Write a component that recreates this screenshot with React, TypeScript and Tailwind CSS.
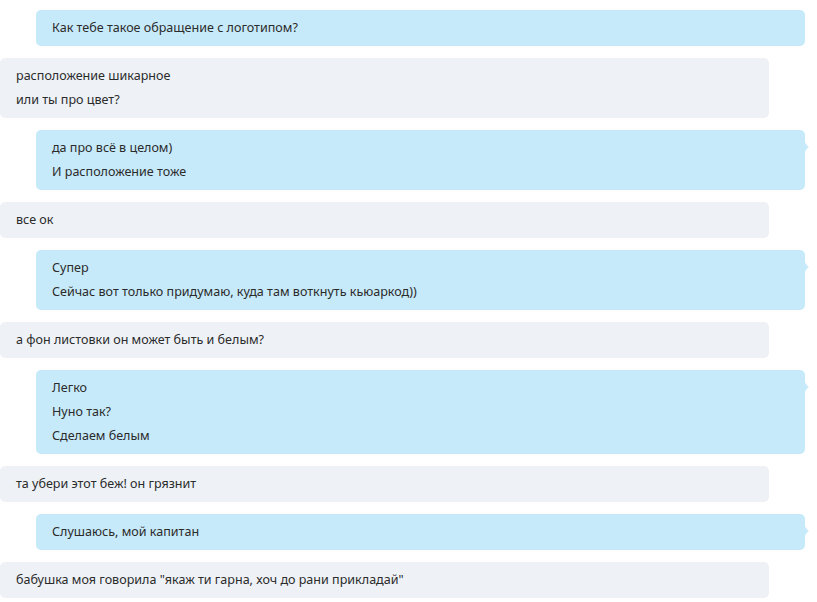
import React from "react";

type Msg = { out: boolean; lines: string[]; tail?: boolean };

const msgs: Msg[] = [
  { out: true, lines: ["Как тебе такое обращение с логотипом?"], tail: false },
  { out: false, lines: ["расположение шикарное", "или ты про цвет?"] },
  { out: true, lines: ["да про всё в целом)", "И расположение тоже"], tail: true },
  { out: false, lines: ["все ок"] },
  { out: true, lines: ["Супер", "Сейчас вот только придумаю, куда там воткнуть кьюаркод))"], tail: true },
  { out: false, lines: ["а фон листовки он может быть и белым?"] },
  { out: true, lines: ["Легко", "Нуно так?", "Сделаем белым"], tail: true },
  { out: false, lines: ["та убери этот беж! он грязнит"] },
  { out: true, lines: ["Слушаюсь, мой капитан"], tail: true },
  { out: false, lines: ["бабушка моя говорила \"якаж ти гарна, хоч до рани прикладай\""] },
];

function Tail() {
  return (
    <svg
      className="absolute -right-[5px] top-[9px]"
      width="6"
      height="16"
      viewBox="0 0 6 16"
    >
      <path d="M0 0 Q1.5 6 5 8 Q1.5 10 0 16 Z" fill="#c7eafa" />
    </svg>
  );
}

export default function App() {
  return (
    <div
      className="w-[817px] h-[602px] bg-white flex flex-col gap-[12px] pt-[10px] overflow-hidden text-[12.55px] text-[#2b2b2b]"
      style={{ fontFamily: '"Noto Sans", "Open Sans", sans-serif' }}
    >
      {msgs.map((m, i) =>
        m.out ? (
          <div
            key={i}
            className="relative ml-[36px] w-[769px] rounded-[5px] bg-[#c7eafa] pl-[16px] py-[6px]"
          >
            {m.lines.map((l, j) => (
              <div key={j} className="leading-[24px] whitespace-pre">
                {l}
              </div>
            ))}
            {m.tail && <Tail />}
          </div>
        ) : (
          <div
            key={i}
            className="w-[769px] rounded-[5px] bg-[#eef2f7] pl-[16px] py-[6px]"
          >
            {m.lines.map((l, j) => (
              <div key={j} className="leading-[24px] whitespace-pre">
                {l}
              </div>
            ))}
          </div>
        )
      )}
    </div>
  );
}
